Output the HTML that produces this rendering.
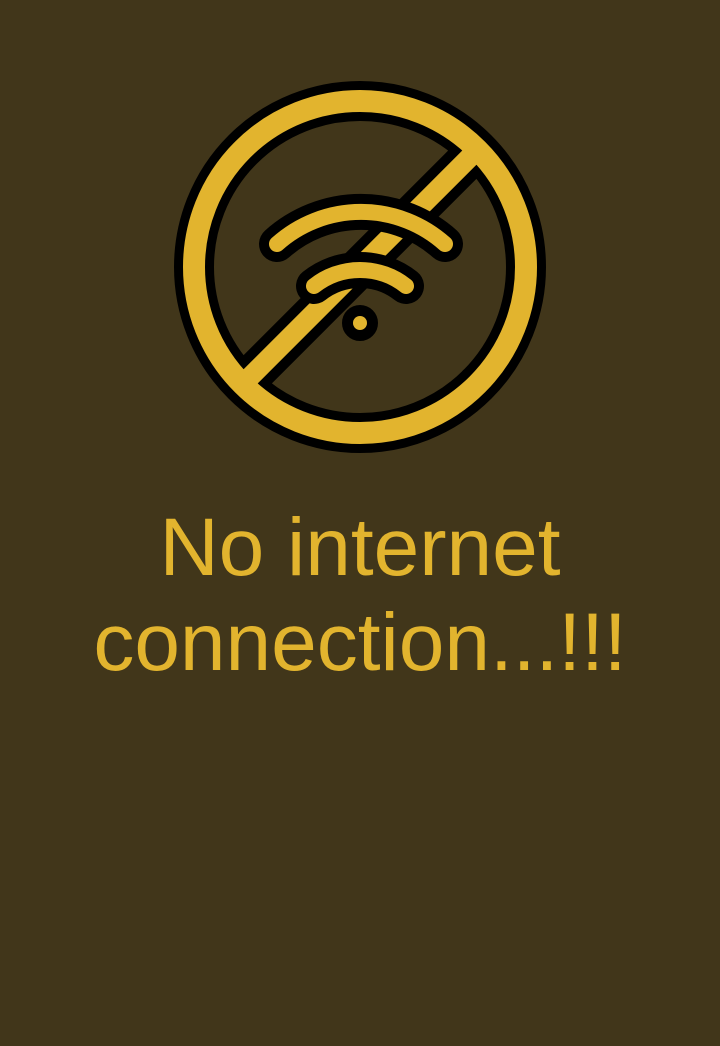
<!DOCTYPE html>
<html><head><meta charset="utf-8"><style>
html,body{margin:0;padding:0;width:720px;height:1046px;background:#41361a;overflow:hidden}
svg{position:absolute;left:0;top:0}
.t{position:absolute;left:0;width:720px;text-align:center;font-family:"Liberation Sans",sans-serif;font-size:82px;color:#e2b42e;line-height:95px;white-space:nowrap}
</style></head><body>
<svg width="720" height="480" viewBox="0 0 720 480">
<g fill="none" stroke-linecap="round">
<circle cx="360" cy="267" r="166" stroke="#000" stroke-width="40"/>
<circle cx="360" cy="267" r="166" stroke="#e2b42e" stroke-width="22"/>
<line x1="252" y1="375" x2="468" y2="159" stroke="#000" stroke-width="40" stroke-linecap="butt"/>
<line x1="244" y1="383" x2="476" y2="151" stroke="#e2b42e" stroke-width="20" stroke-linecap="butt"/>
<path d="M277,244 A126,126 0 0 1 445,244" stroke="#000" stroke-width="36"/>
<path d="M314,286 A74,74 0 0 1 406,286" stroke="#000" stroke-width="36"/>
<path d="M277,244 A126,126 0 0 1 445,244" stroke="#e2b42e" stroke-width="16"/>
<path d="M314,286 A74,74 0 0 1 406,286" stroke="#e2b42e" stroke-width="16"/>
<circle cx="360" cy="323" r="12" stroke="#000" stroke-width="12"/>
</g>
<circle cx="360" cy="323" r="7" fill="#e2b42e"/>
<circle cx="232" cy="139" r="4" fill="#000"/>
<circle cx="466" cy="373" r="4" fill="#000"/>
</svg>
<div class="t" style="top:500px">No internet</div>
<div class="t" style="top:595px">connection...!!!</div>
</body></html>
